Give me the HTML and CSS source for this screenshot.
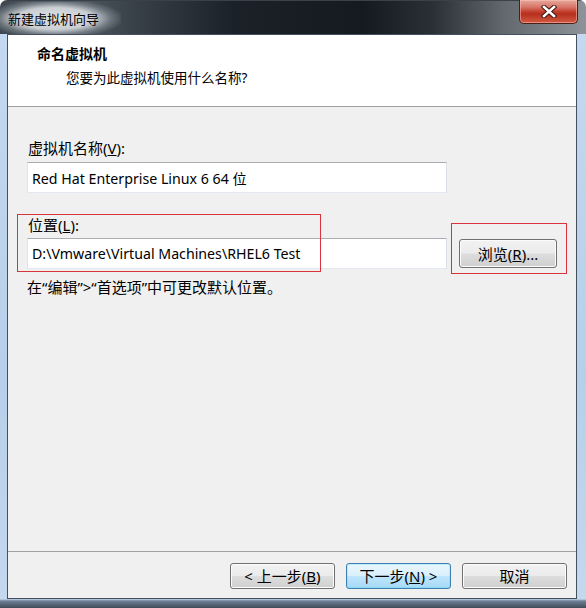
FILE: index.html
```html
<!DOCTYPE html>
<html lang="zh-CN">
<head>
    <meta charset="UTF-8">
    <title>新建虚拟机向导</title>
    <link rel="stylesheet" href="styles.css">
</head>
<body>
<div class="window">
    <div class="titlebar">
        <span class="title">新建虚拟机向导</span>
        <button class="close" type="button">
            <svg width="16" height="13" viewBox="0 0 16 13">
                <path d="M3 2 L13 11 M13 2 L3 11" stroke="#3a1410" stroke-width="4.5" stroke-linecap="square" fill="none"/>
                <path d="M3 2 L13 11 M13 2 L3 11" stroke="#ffffff" stroke-width="2.6" stroke-linecap="square" fill="none"/>
            </svg>
        </button>
    </div>

    <div class="frame">
        <div class="client">
            <div class="header">
                <div class="heading">命名虚拟机</div>
                <div class="subtitle">您要为此虚拟机使用什么名称?</div>
            </div>

            <div class="content">
                <label class="label first" for="vmname">虚拟机名称(<u>V</u>):</label>
                <input class="textbox" type="text" id="vmname" value="Red Hat Enterprise Linux 6 64 位">

                <label class="label second" for="location">位置(<u>L</u>):</label>
                <div class="row">
                    <input class="textbox" type="text" id="location" value="D:\Vmware\Virtual Machines\RHEL6 Test">
                    <button class="btn browse" type="button">浏览(<u>R</u>)...</button>
                </div>
                <p class="hint">在“编辑”&gt;“首选项”中可更改默认位置。</p>

                <div class="mark mark-location"></div>
                <div class="mark mark-browse"></div>
            </div>

            <div class="footer">
                <button class="btn" type="button">&lt; 上一步(<u>B</u>)</button>
                <button class="btn default" type="button">下一步(<u>N</u>) &gt;</button>
                <button class="btn" type="button">取消</button>
            </div>
        </div>
    </div>
</div>
</body>
</html>
```

FILE: styles.css
```css
body {
    margin: 0;
    width: 586px;
    height: 608px;
    overflow: hidden;
    background-color: #ffffff;
    font-family: "Noto Sans", "Noto Sans CJK SC", sans-serif;
    font-size: 13px;
    color: #000;
}
.window {
    height: 608px;
    display: flex;
    flex-direction: column;
    border-radius: 7px 7px 0 0;
    overflow: hidden;
}
.titlebar {
    height: 34px;
    flex: none;
    display: flex;
    justify-content: space-between;
    align-items: flex-start;
    padding: 0 8px 0 0;
    background: linear-gradient(90deg, #3e474f 0%, #59636c 10%, #3a424a 22%, #1b2128 40%, #151a20 62%, #2a3036 74%, #62686e 86%, #8d9399 100%);
    border-top: 1px solid #3a4148;
    box-sizing: border-box;
}
.title {
    margin-top: 1px;
    padding: 7px 22px 6px 8px;
    line-height: 20px;
    font-size: 13px;
    color: #000;
    background: radial-gradient(ellipse 58% 60% at 45% 50%, rgba(228, 231, 234, 0.97) 0%, rgba(215, 219, 223, 0.9) 55%, rgba(170, 177, 184, 0.4) 80%, rgba(120, 128, 136, 0) 100%);
}
.close {
    width: 59px;
    height: 24px;
    margin-top: -1px;
    padding: 0;
    border: 1px solid #4b1e18;
    border-top: none;
    border-radius: 0 0 5px 5px;
    background: linear-gradient(180deg, #e5a99c 0%, #d9776a 30%, #c44130 50%, #b62f1c 60%, #d25a43 100%);
    box-shadow: inset 0 0 0 1px rgba(255, 200, 190, 0.5);
    display: flex;
    align-items: center;
    justify-content: center;
}
.frame {
    flex: 1;
    display: flex;
    padding: 0 9px 9px 7px;
    background: linear-gradient(180deg, #c4d9ef 0%, #b7cfe9 60%, #c4d8ee calc(100% - 9px), #708196 calc(100% - 7px), #3f4b58 100%);
}
.client {
    flex: 1;
    display: flex;
    flex-direction: column;
    background-color: #f0f0f0;
    border: 1px solid #445060;
}
.header {
    height: 72px;
    box-sizing: border-box;
    background-color: #fff;
    border-bottom: 1px solid #a0a0a0;
    padding-top: 9px;
}
.heading {
    padding-left: 29px;
    font-size: 14px;
    font-weight: bold;
    line-height: 20px;
}
.subtitle {
    padding-left: 58px;
    margin-top: 4px;
    line-height: 20px;
    font-size: 13.5px;
}
.content {
    flex: 1;
    position: relative;
    padding: 31px 0 0 19px;
}
.label {
    display: block;
    line-height: 20px;
    padding-left: 1px;
    font-size: 15px;
}
.label.second {
    margin-top: 22px;
}
.textbox {
    display: block;
    box-sizing: border-box;
    width: 420px;
    height: 31px;
    margin: 4px 0 0 0;
    padding: 0 4px;
    border: 1px solid;
    border-color: #abadb3 #dbdfe6 #e3e9ef #e2e3ea;
    background: #fff;
    font-family: "Noto Sans", "Noto Sans CJK SC", sans-serif;
    font-size: 14.2px;
    color: #000;
    outline: none;
}
.row {
    display: flex;
    align-items: center;
    gap: 12px;
    margin-top: 3px;
}
.row .textbox {
    margin: 0;
}
.hint {
    margin: 8px 0 0 0;
    line-height: 20px;
    font-size: 15px;
}
.btn {
    box-sizing: border-box;
    width: 105px;
    height: 26px;
    padding: 0;
    border: 1px solid #707070;
    border-radius: 3px;
    background: linear-gradient(180deg, #f2f2f2 0%, #ebebeb 48%, #dddddd 52%, #cfcfcf 100%);
    box-shadow: inset 0 0 0 1px #fcfcfc;
    font-family: "Noto Sans", "Noto Sans CJK SC", sans-serif;
    font-size: 15px;
    line-height: 20px;
    color: #000;
}
.btn.default {
    border-color: #3c7fb1;
    background: linear-gradient(180deg, #eaf6fd 0%, #d9f0fc 48%, #bee6fd 52%, #a7d9f5 100%);
    box-shadow: inset 0 0 0 1px #48d8fb40;
}
.btn.browse {
    width: 98px;
    height: 29px;
}
.footer {
    flex: none;
    display: flex;
    justify-content: flex-end;
    gap: 11px;
    border-top: 1px solid #a0a0a0;
    padding: 11px 9px 9px 0;
}
.mark {
    position: absolute;
    border: 1px solid #d8343c;
}
.mark-location {
    left: 9px;
    top: 107px;
    width: 302px;
    height: 56px;
}
.mark-browse {
    left: 443px;
    top: 116px;
    width: 114px;
    height: 49px;
}
```
